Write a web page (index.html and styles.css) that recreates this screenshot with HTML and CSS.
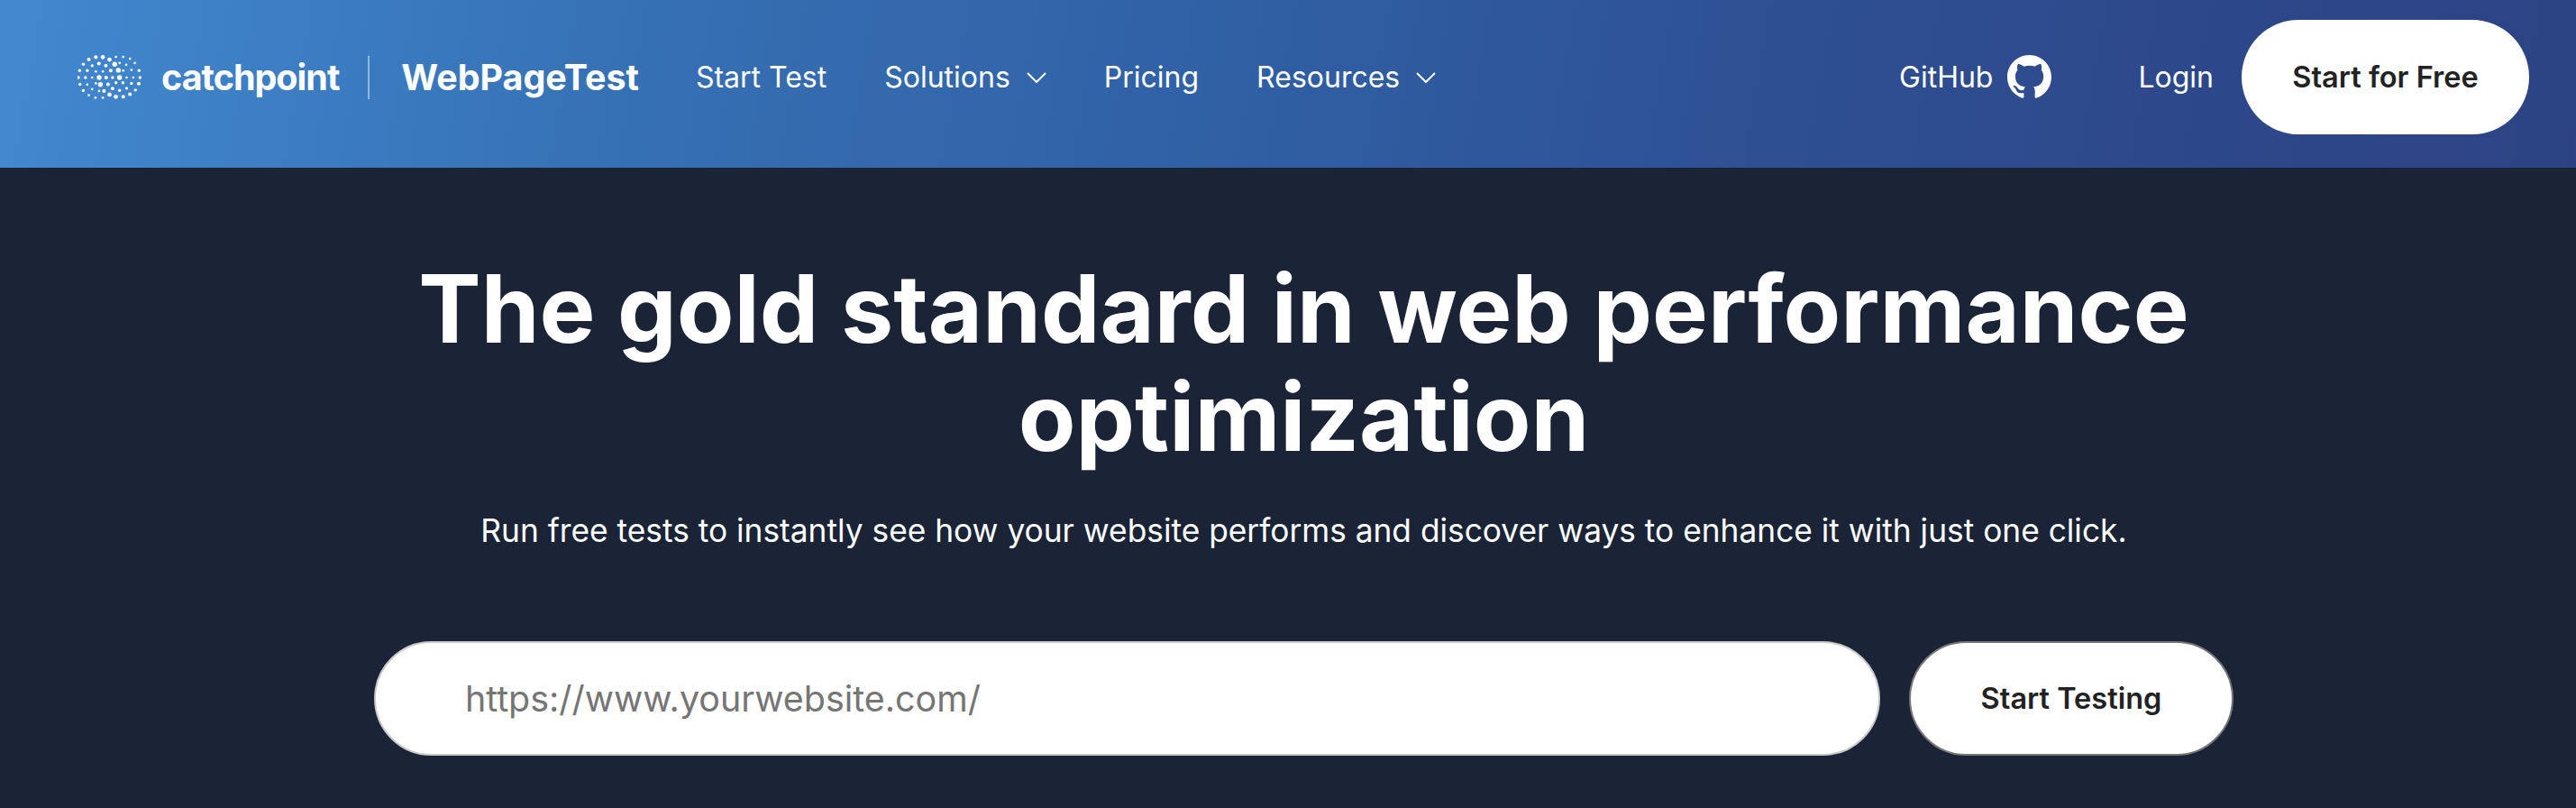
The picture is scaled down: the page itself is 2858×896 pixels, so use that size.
FILE: index.html
```html
<!DOCTYPE html>
<html lang="en">
<head>
<meta charset="utf-8">
<title>WebPageTest</title>
<link rel="stylesheet" href="styles.css">
</head>
<body>
<header class="topbar">
  <a class="brand" href="#">
    <svg class="brand-dots" viewBox="50 35 210 145" preserveAspectRatio="none" aria-hidden="true">
      <g fill="#fff">
        <circle cx="110" cy="42" r="6"/><circle cx="133" cy="42" r="7"/><circle cx="87" cy="50" r="6"/><circle cx="155" cy="50" r="7"/><circle cx="176" cy="41" r="4"/><circle cx="200" cy="41" r="4"/><circle cx="222" cy="47" r="4"/>
        <circle cx="69" cy="65" r="5"/><circle cx="98" cy="70" r="5"/><circle cx="120" cy="63" r="6"/><circle cx="143" cy="70" r="6"/><circle cx="172" cy="65" r="8"/><circle cx="188" cy="61" r="4"/><circle cx="210" cy="67" r="4"/><circle cx="238" cy="61" r="4"/>
        <circle cx="57" cy="86" r="5"/><circle cx="82" cy="86" r="5"/><circle cx="110" cy="89" r="4"/><circle cx="133" cy="89" r="4"/><circle cx="159" cy="86" r="6"/><circle cx="184" cy="85" r="8"/><circle cx="200" cy="86" r="4"/><circle cx="227" cy="84" r="4"/><circle cx="252" cy="86" r="5"/>
        <circle cx="53" cy="109" r="5"/><circle cx="76" cy="109" r="5"/><circle cx="98" cy="109" r="4"/><circle cx="121" cy="109" r="8"/><circle cx="144" cy="109" r="6"/><circle cx="165" cy="109" r="5"/><circle cx="188" cy="109" r="8"/><circle cx="211" cy="109" r="4"/><circle cx="233" cy="109" r="4"/><circle cx="255" cy="109" r="5"/>
        <circle cx="58" cy="131" r="5"/><circle cx="82" cy="132" r="4"/><circle cx="110" cy="128" r="4"/><circle cx="125" cy="132" r="8"/><circle cx="150" cy="131" r="6"/><circle cx="176" cy="126" r="5"/><circle cx="199" cy="126" r="5"/><circle cx="227" cy="128" r="5"/><circle cx="251" cy="129" r="6"/>
        <circle cx="69" cy="152" r="5"/><circle cx="98" cy="147" r="4"/><circle cx="121" cy="153" r="4"/><circle cx="137" cy="153" r="6"/><circle cx="165" cy="145" r="6"/><circle cx="188" cy="151" r="5"/><circle cx="211" cy="144" r="5"/><circle cx="240" cy="150" r="5"/>
        <circle cx="87" cy="167" r="4"/><circle cx="109" cy="175" r="4"/><circle cx="133" cy="175" r="4"/><circle cx="155" cy="165" r="7"/><circle cx="176" cy="172" r="7"/><circle cx="200" cy="172" r="6"/><circle cx="222" cy="164" r="6"/>
      </g>
    </svg>
    <span class="brand-catchpoint">catchpoint</span>
    <span class="brand-divider"></span>
    <span class="brand-wpt">WebPageTest</span>
  </a>
  <nav class="nav-main">
    <a class="nav-link" href="#">Start Test</a>
    <a class="nav-link" href="#">Solutions
      <svg class="chevron" viewBox="0 0 22 12" aria-hidden="true"><path d="M1 1l10 10L21 1"/></svg></a>
    <a class="nav-link" href="#">Pricing</a>
    <a class="nav-link" href="#">Resources
      <svg class="chevron" viewBox="0 0 22 12" aria-hidden="true"><path d="M1 1l10 10L21 1"/></svg></a>
  </nav>
  <div class="nav-right">
    <a class="nav-link github" href="#">GitHub
      <svg class="github-mark" viewBox="0 0 16 16" aria-hidden="true"><path d="M8 0C3.58 0 0 3.58 0 8c0 3.54 2.29 6.53 5.47 7.59.4.07.55-.17.55-.38 0-.19-.01-.82-.01-1.49-2.01.37-2.53-.49-2.69-.94-.09-.23-.48-.94-.82-1.13-.28-.15-.68-.52-.01-.53.63-.01 1.08.58 1.23.82.72 1.21 1.87.87 2.33.66.07-.52.28-.87.51-1.07-1.78-.2-3.64-.89-3.64-3.95 0-.87.31-1.59.82-2.15-.08-.2-.36-1.02.08-2.12 0 0 .67-.21 2.2.82.64-.18 1.32-.27 2-.27.68 0 1.36.09 2 .27 1.53-1.04 2.2-.82 2.2-.82.44 1.1.16 1.92.08 2.12.51.56.82 1.27.82 2.15 0 3.07-1.87 3.75-3.65 3.95.29.25.54.73.54 1.48 0 1.07-.01 1.93-.01 2.2 0 .21.15.46.55.38A8.013 8.013 0 0016 8c0-4.42-3.58-8-8-8z"/></svg></a>
    <a class="nav-link login" href="#">Login</a>
    <a class="cta" href="#">Start for Free</a>
  </div>
</header>
<main class="hero">
  <h1 class="hero-title">The gold standard in web performance optimization</h1>
  <p class="hero-sub">Run free tests to instantly see how your website performs and discover ways to enhance it with just one click.</p>
  <form class="test-form">
    <input class="test-url" type="text" placeholder="https://www.yourwebsite.com/">
    <button class="test-btn" type="button">Start Testing</button>
  </form>
</main>
</body>
</html>
```
FILE: styles.css
```css
html, body {
  margin: 0;
  height: 896px;
  overflow: hidden;
  background: #1b2336;
  font-family: Inter, "Liberation Sans", sans-serif;
}
a { color: inherit; text-decoration: none; }

.topbar {
  height: 186px;
  box-sizing: border-box;
  display: flex;
  align-items: center;
  padding: 0 52px 15px 86px;
  color: #fff;
  background: linear-gradient(100deg, #4289d0 0%, #3670b4 25%, #305ea3 50%, #2e4f92 70%, #2c4283 100%);
}
.brand { display: flex; align-items: center; }
.brand-dots { width: 71px; height: 49px; display: block; }
.brand-catchpoint { margin-left: 22px; font-size: 39.5px; font-weight: 700; letter-spacing: -1px; line-height: 48px; }
.brand-divider { width: 2px; height: 48px; margin: 0 35px 0 32px; background: rgba(255,255,255,.45); }
.brand-wpt { font-size: 39.4px; font-weight: 700; line-height: 48px; }

.nav-main { display: flex; align-items: center; gap: 64px; margin-left: 63px; }
.nav-link { display: flex; align-items: center; font-size: 32px; line-height: 40px; white-space: nowrap; }
.chevron { width: 22px; height: 12px; margin-left: 18px; fill: none; stroke: #fff; stroke-width: 2; }
.nav-right { display: flex; align-items: center; margin-left: auto; }
.github-mark { width: 49px; height: 49px; margin-left: 16px; fill: #fff; }
.login { margin-left: 96px; }
.cta {
  width: 319px; height: 127px; margin-left: 31px;
  display: flex; align-items: center; justify-content: center;
  border-radius: 64px; background: #fff; color: #222;
  font-size: 32.5px; font-weight: 600;
}

.hero { padding: 96px 0 0 35px; display: flex; flex-direction: column; align-items: center; color: #fff; }
.hero-title { width: 2064px; margin: 0; text-align: center; font-size: 104px; line-height: 120px; font-weight: 700; }
.hero-sub { margin: 43px 0 0; font-size: 35.3px; line-height: 48px; }
.test-form { display: flex; gap: 32px; margin-top: 98px; }
.test-url {
  width: 1671px; height: 127px; box-sizing: border-box;
  padding: 0 99px; border: 2px solid #c8c8c8; border-radius: 64px;
  background: #fff; font: 400 39.4px Inter, sans-serif; color: #222; outline: 0;
}
.test-url::placeholder { color: #757575; opacity: 1; }
.test-btn {
  width: 360px; height: 127px; box-sizing: border-box;
  border: 2px solid #767676; border-radius: 64px;
  background: #fff; color: #222; font: 600 32.5px Inter, sans-serif;
}
```
